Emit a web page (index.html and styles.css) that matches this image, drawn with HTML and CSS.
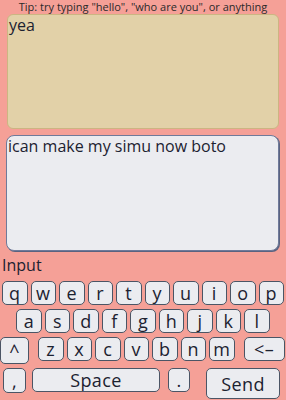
FILE: index.html
```html
<!DOCTYPE html>
<html>
<head>
<meta charset="utf-8">
<link rel="stylesheet" href="styles.css">
</head>
<body>
<div class="app">
  <div class="tip">Tip: try typing "hello", "who are you", or anything</div>
  <div class="box reply">yea</div>
  <div class="box input-box">ican make my simu now boto</div>
  <div class="label">Input</div>
  <div class="keyboard">
    <div class="row">
      <span class="key">q</span><span class="key">w</span><span class="key">e</span><span class="key">r</span><span class="key">t</span><span class="key">y</span><span class="key">u</span><span class="key">i</span><span class="key">o</span><span class="key">p</span>
    </div>
    <div class="row">
      <span class="key">a</span><span class="key">s</span><span class="key">d</span><span class="key">f</span><span class="key">g</span><span class="key">h</span><span class="key">j</span><span class="key">k</span><span class="key">l</span>
    </div>
    <div class="row row3">
      <span class="key shift">^</span>
      <span class="key">z</span><span class="key">x</span><span class="key">c</span><span class="key">v</span><span class="key">b</span><span class="key">n</span><span class="key">m</span>
      <span class="key back">&lt;–</span>
    </div>
    <div class="row row4">
      <span class="key comma">,</span>
      <span class="key space">Space</span>
      <span class="key dot">.</span>
      <span class="key send">Send</span>
    </div>
  </div>
</div>
</body>
</html>
```

FILE: styles.css
```css
html, body {
  margin: 0;
  padding: 0;
  background: #f5a097;
}
body {
  font-family: "Open Sans", "DejaVu Sans", sans-serif;
  color: #1c2230;
  width: 286px;
  height: 400px;
  overflow: hidden;
}
.app {
  display: flex;
  flex-direction: column;
}
.tip {
  font-size: 11px;
  line-height: 14px;
  text-align: center;
  color: #2a2a2a;
  height: 14px;
}
.box {
  box-sizing: border-box;
  font-size: 16px;
  line-height: 20px;
  padding: 0 0 0 1px;
}
.reply {
  margin: 0 7px 0 7px;
  height: 115px;
  background: #e2d1a8;
  border: 1.5px solid #ccb582;
  border-radius: 6px;
}
.input-box {
  margin: 6px 7px 0 6px;
  height: 116px;
  background: #ebecf0;
  border: 1.5px solid #6f7a9a;
  border-radius: 8px;
  box-shadow: 1px 1px 0 #5a6380;
}
.label {
  font-size: 16px;
  line-height: 20px;
  margin: 4px 0 0 2px;
  height: 22px;
}
.keyboard {
  display: flex;
  flex-direction: column;
  gap: 4px;
  margin-top: 4px;
}
.row {
  display: flex;
  justify-content: center;
  gap: 3px;
}
.key {
  box-sizing: border-box;
  width: 25.5px;
  height: 24px;
  background: #ebecf0;
  border: 1.5px solid #4b5565;
  border-radius: 5px;
  display: flex;
  align-items: center;
  justify-content: center;
  font-size: 18px;
  letter-spacing: 0.4px;
  line-height: 1;
  color: #1c2230;
}
.row3 {
  justify-content: flex-start;
}
.shift {
  width: 29px;
  height: 27px;
  margin-right: 6px;
}
.back {
  width: 41px;
  margin-left: 6px;
}
.row4 {
  justify-content: flex-start;
  align-items: flex-start;
  padding-left: 3px;
}
.comma {
  width: 23px;
  height: 25px;
}
.space {
  width: 128px;
  margin-left: 3px;
}
.dot {
  width: 22px;
  margin-left: 5px;
}
.send {
  width: 74px;
  height: 31px;
  margin-left: 13px;
}
```
